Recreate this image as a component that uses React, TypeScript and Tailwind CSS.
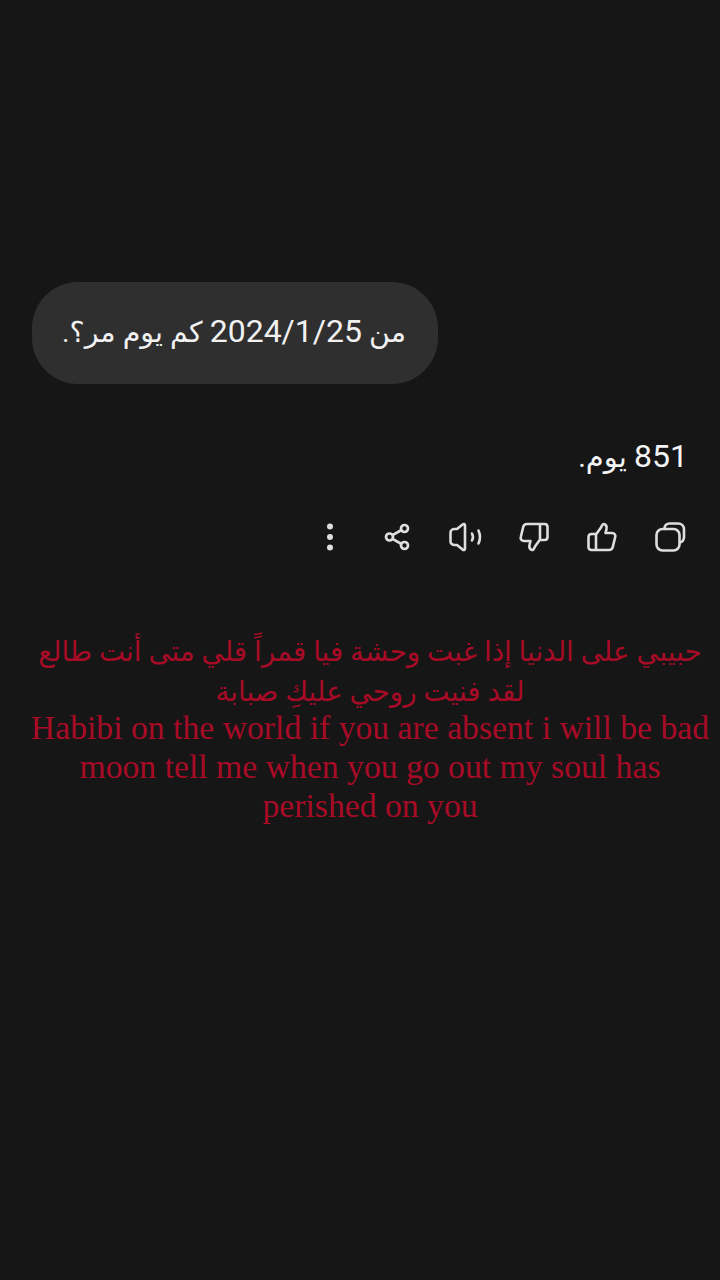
function IconButton({ children }: { children: React.ReactNode }) {
  return <div className="flex h-9 w-9 items-center justify-center text-[#dedede]">{children}</div>;
}

export default function App() {
  return (
    <div className="min-h-[1280px] w-[720px] overflow-hidden bg-[#161617] pt-[282px] font-['Roboto','DejaVu_Sans',sans-serif]">
      {/* user bubble */}
      <div className="pl-8">
        <div
          dir="rtl"
          className="flex h-[102px] w-[406px] items-center whitespace-pre rounded-[46px] bg-[#2f2f2f] pb-1 pl-8 pr-8 text-[28.500px] text-[#f1f1f1]"
        >
          <span>
            من <span className="text-[32px]">2024/1/25</span> كم يوم مر؟.
          </span>
        </div>
      </div>

      {/* answer */}
      <div dir="rtl" className="mt-[50px] h-[44px] pr-[32px] text-[29px] leading-[44px] text-[#f4f4f4]">
        <span className="text-[32px]">851</span> يوم.
      </div>

      {/* actions */}
      <div dir="rtl" className="mt-[41px] flex h-9 w-[688px] gap-8">
        <IconButton>
          <svg width="32" height="32" viewBox="0 0 32 32" fill="none" stroke="currentColor" strokeWidth="2.6" strokeLinejoin="round" strokeLinecap="round">
            <path d="M10.500 8V7.500C10.500 4.500 12.500 2.500 15.500 2.500h8.500c3.500 0 6 2.500 6 6v7.500c0 2.800-1.500 4.800-4 5.500" />
            <rect x="2.500" y="8" width="23" height="21.500" rx="6" />
          </svg>
        </IconButton>
        <IconButton>
          <svg width="32" height="32" viewBox="0 0 32 32" fill="none" stroke="currentColor" strokeWidth="2.6" strokeLinejoin="round" strokeLinecap="round">
            <path d="M10 29V13.500l5-7c1-2 1.500-4 3-3.500 2.300.8 3 3 2.400 5.500L19.500 12H26c2.500 0 3.800 2 3.200 4l-2.400 10c-.5 2-1.800 3-3.800 3H5.500C3.500 29 2.500 27.800 2.500 26V16c0-2 1.200-3 3-3H10" />
          </svg>
        </IconButton>
        <IconButton>
          <svg width="32" height="32" viewBox="0 0 32 32" fill="none" stroke="currentColor" strokeWidth="2.6" strokeLinejoin="round" strokeLinecap="round">
            <path d="M22 3v15.500l-5 7c-1 2-1.500 4-3 3.500-2.300-.8-3-3-2.400-5.500l.9-3.500H6c-2.500 0-3.800-2-3.200-4l2.400-10C5.700 4 7 3 9 3h17.500C28.500 3 29.500 4.200 29.500 6v10c0 2-1.200 3-3 3H22" />
          </svg>
        </IconButton>
        <IconButton>
          <svg width="34" height="32" viewBox="0 0 34 32" fill="none" stroke="currentColor" strokeWidth="2.6" strokeLinejoin="round" strokeLinecap="round">
            <path d="M16 4.500v23c0 1.500-1.300 2-2.400 1L8 24H5.500C3.500 24 1.500 22.500 1.500 20.500v-9C1.500 9.500 3.500 8 5.500 8H8l5.600-4.500c1.100-1 2.400-.5 2.400 1z" />
            <path d="M23 12.500c1.200 2.200 1.200 4.800 0 7" />
            <path d="M29.500 9.500c1.800 4 1.800 9 0 13" />
          </svg>
        </IconButton>
        <IconButton>
          <svg width="28" height="28" viewBox="0 0 28 28" fill="none" stroke="currentColor" strokeWidth="2.700">
            <circle cx="20.500" cy="5.500" r="3.500" />
            <circle cx="5.500" cy="14" r="3.500" />
            <circle cx="20.500" cy="22.500" r="3.500" />
            <path d="M8.500 12.200l9-5.200M8.500 15.800l9 5.200" />
          </svg>
        </IconButton>
        <IconButton>
          <svg width="8" height="28" viewBox="0 0 8 28" fill="currentColor">
            <circle cx="4" cy="3.500" r="3" />
            <circle cx="4" cy="14" r="3" />
            <circle cx="4" cy="24.500" r="3" />
          </svg>
        </IconButton>
      </div>

      {/* caption */}
      <div className="mt-[77px] w-[740px] text-center font-['Liberation_Serif','DejaVu_Sans',serif] text-[#a80b26]">
        <p dir="rtl" className="text-[27.700px] leading-[40px]">
          حبيبي على الدنيا إذا غبت وحشة فيا قمراً قلي متى أنت طالع
          <br />
          لقد فنيت روحي عليكِ صبابة
        </p>
        <p className="mx-auto -mt-1 w-[690px] text-[33.700px] leading-[39px]">
          Habibi on the world if you are absent i will be bad moon tell me when you go out my soul has perished on you
        </p>
      </div>
    </div>
  );
}
